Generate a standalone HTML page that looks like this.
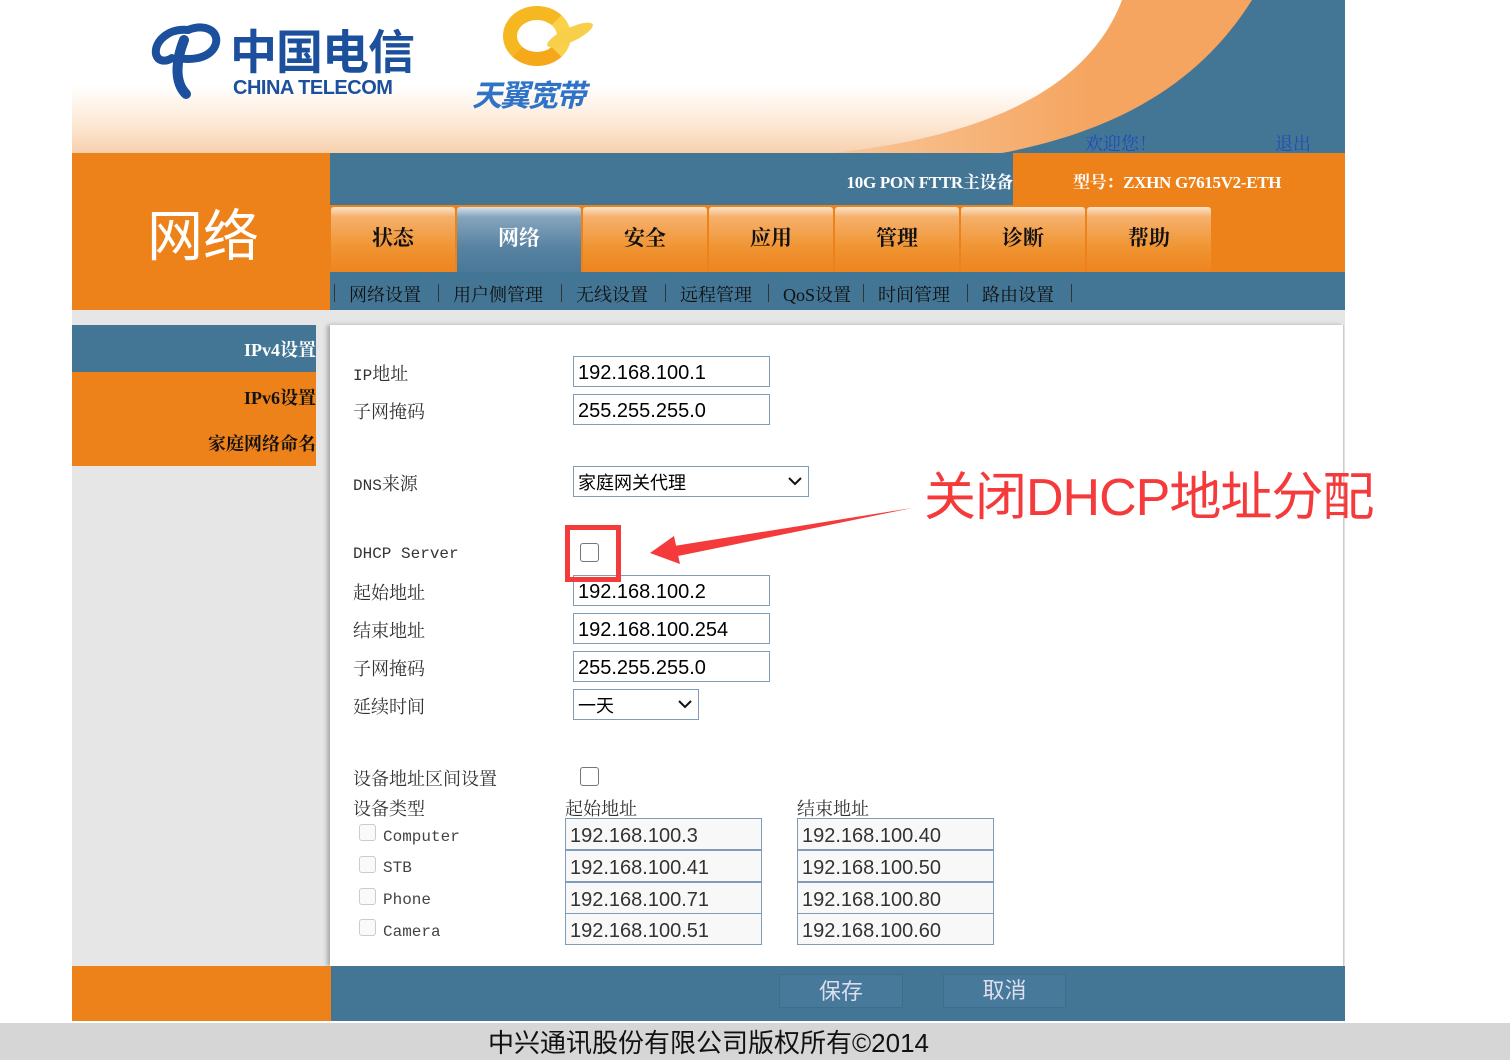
<!DOCTYPE html>
<html><head><meta charset="utf-8"><style>
*{margin:0;padding:0;box-sizing:border-box}
body{width:1510px;height:1060px;background:#fff;position:relative;overflow:hidden;font-family:"Liberation Serif","Noto Serif CJK SC",serif}
.a{position:absolute}
.ser{font-family:"Liberation Serif","Noto Serif CJK SC",serif}
.sans{font-family:"Liberation Sans","Noto Sans CJK SC",sans-serif}
.lbl{position:absolute;left:353px;font-size:18px;color:#333;font-family:"Liberation Serif","Noto Serif CJK SC",serif;white-space:nowrap}
.m{font-family:"Liberation Mono",monospace;font-size:16px}
.inp{position:absolute;left:573px;width:197px;height:31px;border:1px solid #7f9db9;background:#fff;font-family:"Liberation Sans","Noto Sans CJK SC",sans-serif;font-size:20px;padding-left:4px;padding-top:2px;line-height:29px;color:#000}
.cb{position:absolute;width:19px;height:19px;border:1.5px solid #767676;border-radius:3px;background:#fff}
.cbd{position:absolute;width:17px;height:17px;border:1px solid #ccc;border-radius:3px;background:#fafafa}
.tab{position:absolute;top:207px;width:124px;height:65px;background:linear-gradient(#fbe3c8 0,#f6b06c 10px,#f09533 40px,#ee8420);font-size:21px;font-weight:bold;color:#111;text-align:center;line-height:62px;border-radius:3px 3px 0 0}
.sub{position:absolute;top:281px;font-size:18px;color:#111}
.sep{position:absolute;top:284px;width:1px;height:18px;background:#333}
.rg{position:absolute;width:197px;height:32px;border:1px solid #7f9db9;background:#f8f8f8;font-family:"Liberation Sans","Noto Sans CJK SC",sans-serif;font-size:20px;padding-left:4px;padding-top:2px;line-height:30px;color:#333}
</style></head><body>
<!-- header -->
<div class="a" style="left:72px;top:0;width:1273px;height:153px;background:linear-gradient(#fff 0,#fff 85px,#fde8d4 125px,#f7d0ae 153px)"></div>
<svg class="a" style="left:72px;top:0" width="1273" height="153">
<defs><linearGradient id="og" x1="0" y1="0" x2="1" y2="0"><stop offset="0" stop-color="#f8c79a"/><stop offset="0.5" stop-color="#f5a560"/></linearGradient></defs>
<path d="M1050,0 C1020,80 930,135 760,153 L1273,153 L1273,0 Z" fill="url(#og)"/>
<path d="M1180,0 C1130,80 1050,130 930,153 L1273,153 L1273,0 Z" fill="#437595"/>
</svg>
<svg class="a" style="left:148px;top:20px" width="80" height="80">
<path d="M40,10 C20,8 6,22 8,34 C10,42 18,42 24,38" fill="none" stroke="#1c4f9c" stroke-width="8" stroke-linecap="round"/>
<path d="M40,10 C60,2 74,14 66,28 C58,40 40,40 30,38" fill="none" stroke="#1c4f9c" stroke-width="8" stroke-linecap="round"/>
<path d="M36,20 C28,40 26,62 38,74" fill="none" stroke="#1c4f9c" stroke-width="10" stroke-linecap="round"/>
</svg>
<div class="a sans" style="left:230px;top:14px;font-size:47px;font-weight:bold;color:#1c4f9c;letter-spacing:-1px">中国电信</div>
<div class="a sans" style="left:233px;top:77px;font-size:20px;font-weight:bold;color:#1c4f9c;letter-spacing:-0.5px">CHINA TELECOM</div>
<div class="a" style="left:503px;top:6px;width:68px;height:60px;border-radius:50%;border:14px solid #f6b821;border-right-color:#f9d24a;border-bottom-color:#f4a81a"></div>
<div class="a" style="left:545px;top:28px;width:50px;height:14px;border-radius:50%;background:#f8cf4a;transform:rotate(-25deg)"></div>
<div class="a sans" style="left:472px;top:71px;font-size:30px;font-weight:bold;font-style:italic;color:#2e73c8;letter-spacing:-2px">天翼宽带</div>
<div class="a ser" style="left:1085px;top:130px;font-size:18px;color:#1f4fb5">欢迎您！</div>
<div class="a ser" style="left:1275px;top:130px;font-size:18px;color:#1f4fb5">退出</div>
<!-- top bars -->
<div class="a" style="left:72px;top:153px;width:258px;height:157px;background:#ee821a"></div>
<div class="a sans" style="left:147px;top:192px;font-size:56px;color:#fff">网络</div>
<div class="a" style="left:330px;top:153px;width:683px;height:52px;background:#437595"></div>
<div class="a" style="left:1013px;top:153px;width:332px;height:52px;background:#ee821a"></div>
<div class="a ser" style="right:497px;top:168px;font-size:17px;font-weight:bold;color:#fff;letter-spacing:-0.3px">10G PON FTTR主设备</div>
<div class="a ser" style="left:1073px;top:168px;font-size:17px;font-weight:bold;color:#fff;letter-spacing:-0.3px">型号：ZXHN G7615V2-ETH</div>
<div class="a" style="left:330px;top:205px;width:1015px;height:67px;background:#ee821a"></div>
<div class="tab" style="left:331px">状态</div>
<div class="tab" style="left:457px;background:linear-gradient(#d7e2ea 0,#86a5bd 10px,#5883a2 40px,#4a7899);color:#fff">网络</div>
<div class="tab" style="left:583px">安全</div>
<div class="tab" style="left:709px">应用</div>
<div class="tab" style="left:835px">管理</div>
<div class="tab" style="left:961px">诊断</div>
<div class="tab" style="left:1087px">帮助</div>
<div class="a" style="left:330px;top:272px;width:1015px;height:38px;background:#437595"></div>
<div class="sep" style="left:334px"></div><div class="sub" style="left:349px">网络设置</div>
<div class="sep" style="left:438px"></div><div class="sub" style="left:453px">用户侧管理</div>
<div class="sep" style="left:561px"></div><div class="sub" style="left:576px">无线设置</div>
<div class="sep" style="left:665px"></div><div class="sub" style="left:680px">远程管理</div>
<div class="sep" style="left:768px"></div><div class="sub" style="left:783px">QoS设置</div>
<div class="sep" style="left:863px"></div><div class="sub" style="left:878px">时间管理</div>
<div class="sep" style="left:967px"></div><div class="sub" style="left:982px">路由设置</div>
<div class="sep" style="left:1071px"></div>
<!-- body -->
<div class="a" style="left:72px;top:310px;width:1273px;height:656px;background:#e6e6e6"></div>
<div class="a" style="left:72px;top:325px;width:244px;height:47px;background:#437595"></div>
<div class="a" style="left:72px;top:372px;width:244px;height:94px;background:#ee821a"></div>
<div class="a" style="right:1194px;top:336px;font-size:18px;font-weight:bold;color:#fff">IPv4设置</div>
<div class="a" style="right:1194px;top:384px;font-size:18px;font-weight:bold;color:#111">IPv6设置</div>
<div class="a" style="right:1194px;top:430px;font-size:18px;font-weight:bold;color:#111">家庭网络命名</div>
<div class="a" style="left:330px;top:325px;width:1014px;height:641px;background:#fff;box-shadow:-3px 0 4px #aaa;border-right:1px solid #ccc"></div>
<div class="lbl" style="top:360px"><span class="m">IP</span>地址</div><div class="inp" style="top:356px">192.168.100.1</div>
<div class="lbl" style="top:398px">子网掩码</div><div class="inp" style="top:394px">255.255.255.0</div>
<div class="lbl" style="top:470px"><span class="m">DNS</span>来源</div>
<div class="inp" style="top:466px;width:236px;font-size:18px">家庭网关代理<svg class="a" style="right:6px;top:10px" width="14" height="9"><path d="M1,1 L7,7 L13,1" fill="none" stroke="#111" stroke-width="2"/></svg></div>
<div class="lbl" style="top:542px"><span class="m">DHCP Server</span></div>
<div class="cb" style="left:580px;top:543px"></div>
<div class="lbl" style="top:579px">起始地址</div><div class="inp" style="top:575px">192.168.100.2</div>
<div class="lbl" style="top:617px">结束地址</div><div class="inp" style="top:613px">192.168.100.254</div>
<div class="lbl" style="top:655px">子网掩码</div><div class="inp" style="top:651px">255.255.255.0</div>
<div class="lbl" style="top:693px">延续时间</div>
<div class="inp" style="top:689px;width:126px;font-size:18px">一天<svg class="a" style="right:6px;top:10px" width="14" height="9"><path d="M1,1 L7,7 L13,1" fill="none" stroke="#111" stroke-width="2"/></svg></div>
<div class="lbl" style="top:765px">设备地址区间设置</div>
<div class="cb" style="left:580px;top:767px"></div>
<div class="lbl" style="top:795px">设备类型</div>
<div class="lbl" style="top:795px;left:565px">起始地址</div>
<div class="lbl" style="top:795px;left:797px">结束地址</div>
<div class="cbd" style="left:359px;top:824px"></div><div class="lbl m" style="left:383px;top:828px;color:#444">Computer</div>
<div class="cbd" style="left:359px;top:856px"></div><div class="lbl m" style="left:383px;top:859px;color:#444">STB</div>
<div class="cbd" style="left:359px;top:888px"></div><div class="lbl m" style="left:383px;top:891px;color:#444">Phone</div>
<div class="cbd" style="left:359px;top:919px"></div><div class="lbl m" style="left:383px;top:923px;color:#444">Camera</div>
<div class="rg" style="left:565px;top:818px">192.168.100.3</div><div class="rg" style="left:797px;top:818px">192.168.100.40</div>
<div class="rg" style="left:565px;top:850px">192.168.100.41</div><div class="rg" style="left:797px;top:850px">192.168.100.50</div>
<div class="rg" style="left:565px;top:882px">192.168.100.71</div><div class="rg" style="left:797px;top:882px">192.168.100.80</div>
<div class="rg" style="left:565px;top:913px">192.168.100.51</div><div class="rg" style="left:797px;top:913px">192.168.100.60</div>
<!-- bottom -->
<div class="a" style="left:72px;top:966px;width:259px;height:55px;background:#ee821a"></div>
<div class="a" style="left:331px;top:966px;width:1014px;height:55px;background:#437595"></div>
<div class="a sans" style="left:779px;top:974px;width:124px;height:34px;background:#46799a;border:1px solid #3f6e8c;color:#dde;font-size:22px;text-align:center;line-height:34px">保存</div>
<div class="a sans" style="left:943px;top:974px;width:123px;height:34px;background:#46799a;border:1px solid #3f6e8c;color:#dde;font-size:22px;text-align:center;line-height:32px">取消</div>
<div class="a" style="left:0;top:1023px;width:1510px;height:37px;background:#d6d6d6"></div>
<div class="a sans" style="left:0;top:1023px;width:1417px;text-align:center;font-size:26px;color:#111">中兴通讯股份有限公司版权所有©2014</div>
<!-- annotation -->
<div class="a" style="left:565px;top:525px;width:56px;height:57px;border:5px solid #f43a3a"></div>
<svg class="a" style="left:640px;top:500px" width="280" height="70">
<path d="M272,8 L34,46 L38,56 Z" fill="#f43a3a"/>
<path d="M10,53 L34,36 L40,64 Z" fill="#f43a3a"/>
</svg>
<div class="a sans" style="left:924px;top:455px;font-size:52px;color:#f43a3a;letter-spacing:-1px">关闭DHCP地址分配</div>
</body></html>
